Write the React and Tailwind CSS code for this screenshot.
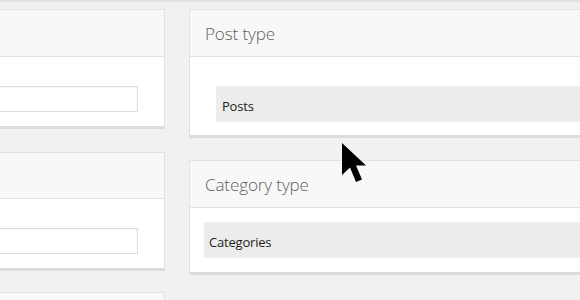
import React from "react";

const FONT = { fontFamily: '"Open Sans", "Noto Sans", sans-serif' };

function Card({ title, children, bodyClass, headerClass = "h-[47px]", className = "" }) {
  return (
    <div className={"bg-white border border-[#e2e2e2] border-b-[3px] border-b-[#dcdcdc] " + className}>
      <div className={"bg-[#f8f8f8] border-b border-[#e2e2e2] flex items-center pl-[15px] " + headerClass}>
        {title && (
          <span className="text-[17px] font-light text-[#606060] leading-none tracking-[-0.1px]">{title}</span>
        )}
      </div>
      <div className={bodyClass}>{children}</div>
    </div>
  );
}

function TextInput() {
  return <div className="h-[26px] bg-white border border-[#dddddd] shadow-[inset_0_1px_2px_rgba(0,0,0,0.04)]" />;
}

function SelectBox({ label, className }) {
  return (
    <div className={"h-[36px] bg-[#ececec] rounded-[2px] flex items-center pt-[5px] text-[13px] tracking-[-0.2px] text-[#1d1d1d] " + className}>
      {label}
    </div>
  );
}

function Cursor() {
  return (
    <svg
      className="absolute left-[342px] top-[141px]"
      width="26"
      height="42"
      viewBox="0 0 26 42"
    >
      <polygon
        points="0,0 0,32 8,24.5 14,39 20,36.5 14,22.5 24,22.5"
        fill="#000"
      />
    </svg>
  );
}

export default function App() {
  return (
    <div
      className="relative w-[580px] h-[300px] overflow-hidden bg-[#f1f1f1] border-t-2 border-[#e2e2e2]"
      style={FONT}
    >
      <div className="flex gap-[24px] pt-[7px] ml-[-100px]">
        <div className="w-[265px] shrink-0 flex flex-col">
          <Card className="mb-[23px]" bodyClass="pt-[29px] pb-[14px] pl-[20px] pr-[26px]">
            <TextInput />
          </Card>
          <Card className="mb-[21px]" headerClass="h-[46px]" bodyClass="pt-[29px] pb-[14px] pl-[20px] pr-[26px]">
            <TextInput />
          </Card>
          <Card bodyClass="h-[60px]" />
        </div>

        <div className="w-[520px] shrink-0 flex flex-col gap-[22px]">
          <Card title="Post type" className="border-b-4" bodyClass="pt-[29px] pb-[13px] pl-[26px] pr-[26px]">
            <SelectBox label="Posts" className="px-[6px]" />
          </Card>
          <Card title="Category type" bodyClass="p-[14px]">
            <SelectBox label="Categories" className="px-[5px]" />
          </Card>
        </div>
      </div>
      <Cursor />
    </div>
  );
}
